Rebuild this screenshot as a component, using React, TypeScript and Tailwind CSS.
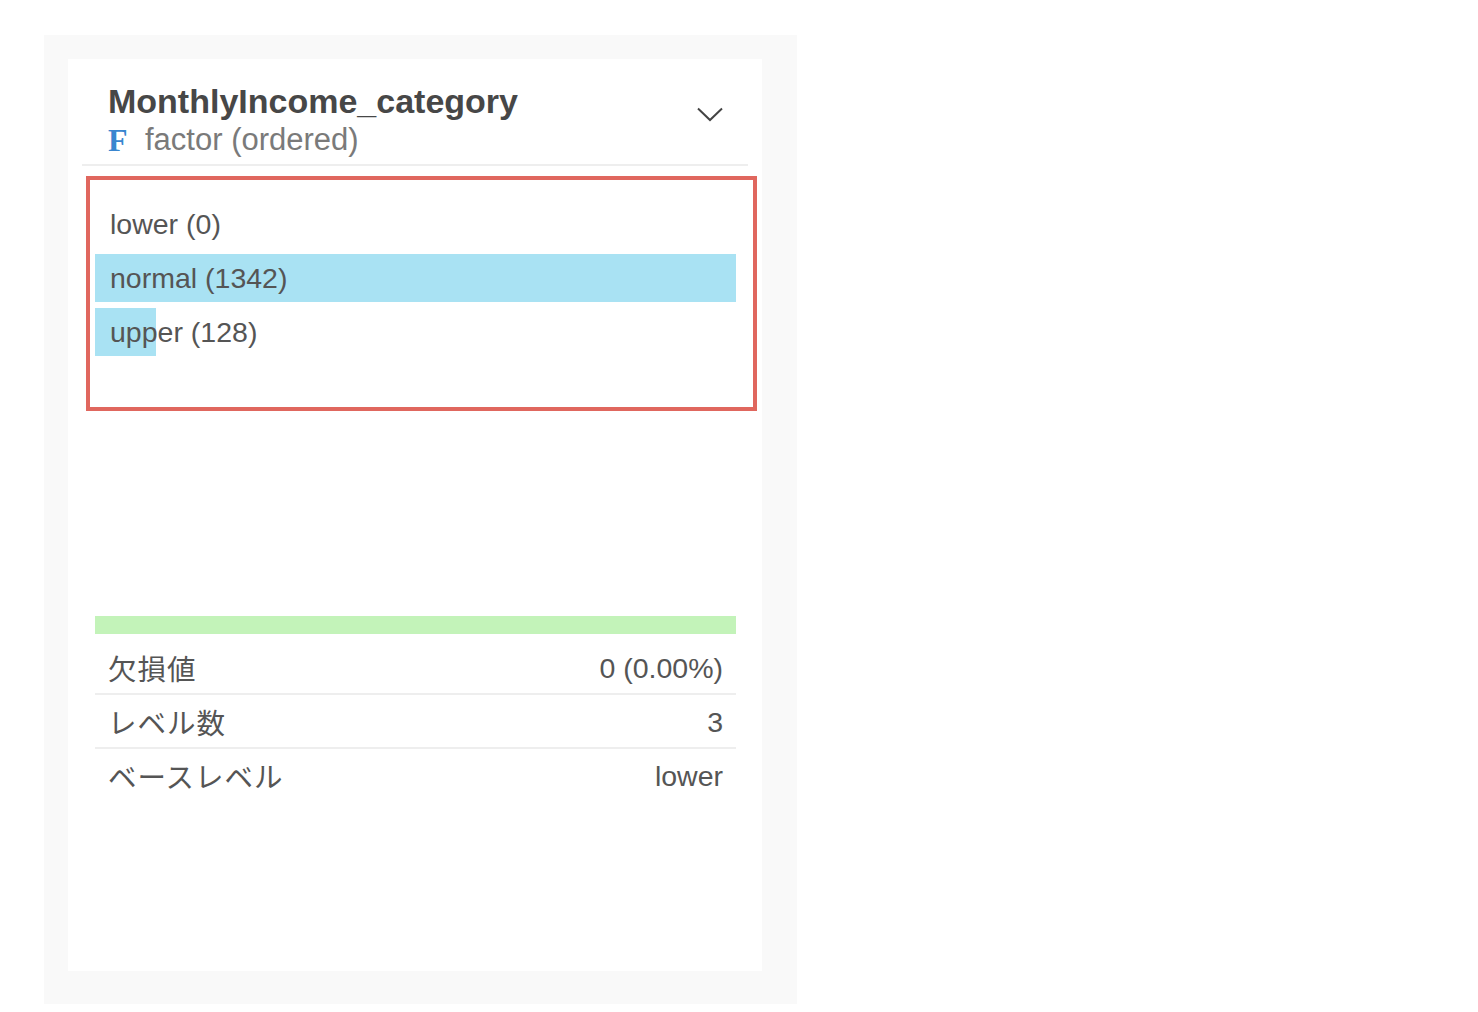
import React from "react";

const levels = [
  { name: "lower", count: 0 },
  { name: "normal", count: 1342 },
  { name: "upper", count: 128 },
];

const stats = [
  { label: "欠損値", value: "0 (0.00%)" },
  { label: "レベル数", value: "3" },
  { label: "ベースレベル", value: "lower" },
];

export default function App() {
  const max = Math.max(...levels.map((l) => l.count));
  return (
    <div
      className="w-full h-screen bg-white pl-[44px] pt-[35px]"
      style={{ fontFamily: '"Liberation Sans", Arial, "Noto Sans CJK JP", sans-serif' }}
    >
      <div className="w-[753px] h-[969px] bg-[#f9f9f9] p-[24px]">
        <div className="w-[694px] h-[912px] bg-white flex flex-col">
          {/* Header */}
          <div className="mx-[14px] pt-[22px] border-b-2 border-[#eeeeee] flex justify-between">
            <div className="pl-[26px] pb-[6px]">
              <div className="text-[34px] leading-[40px] font-bold text-[#474747]">
                MonthlyIncome_category
              </div>
              <div className="flex items-center h-[37px]">
                <span
                  className="text-[32px] font-bold text-[#3a86cf] leading-none w-[37px]"
                  style={{ fontFamily: '"Liberation Serif", "Times New Roman", serif' }}
                >
                  F
                </span>
                <span className="text-[31px] leading-none text-[#7a7a7a]">factor (ordered)</span>
              </div>
            </div>
            <div className="pr-[25px] pt-[26px]">
              <svg width="26" height="15" viewBox="0 0 26 15" fill="none">
                <path d="M1 1.5 L13 13 L25 1.5" stroke="#444" strokeWidth="2" />
              </svg>
            </div>
          </div>

          {/* Level bars (highlighted) */}
          <div className="mt-[10px] ml-[18px] mr-[5px] h-[235px] border-4 border-[#e0675e] pl-[5px] pr-[17px] pt-[20px] flex flex-col gap-[6px]">
            {levels.map((l) => (
              <div key={l.name} className="relative h-[48px] flex items-center">
                <div
                  className="absolute left-0 top-0 h-full bg-[#a9e2f3]"
                  style={{ width: `${(l.count / max) * 100}%` }}
                />
                <span className="relative pl-[15px] text-[28.5px] text-[#555555] leading-none">
                  {l.name} ({l.count})
                </span>
              </div>
            ))}
          </div>

          {/* Missing bar */}
          <div className="mt-[205px] ml-[27px] mr-[26px] h-[18px] bg-[#c3f3b9]" />

          {/* Stats */}
          <div className="mt-[7px] ml-[27px] mr-[26px] flex flex-col">
            {stats.map((s, i) => (
              <div
                key={s.label}
                className={
                  i < stats.length - 1
                    ? "h-[54px] pt-[2px] flex items-center justify-between px-[13px] border-b-2 border-[#eeeeee] text-[28.5px] text-[#555555]"
                    : "h-[52px] pt-[2px] flex items-center justify-between px-[13px] text-[28.5px] text-[#555555]"
                }
              >
                <span
                  style={{ fontFamily: '"Noto Sans CJK JP", sans-serif' }}
                  className="leading-none tracking-[1px]"
                >
                  {s.label}
                </span>
                <span className="leading-none">{s.value}</span>
              </div>
            ))}
          </div>
        </div>
      </div>
    </div>
  );
}
